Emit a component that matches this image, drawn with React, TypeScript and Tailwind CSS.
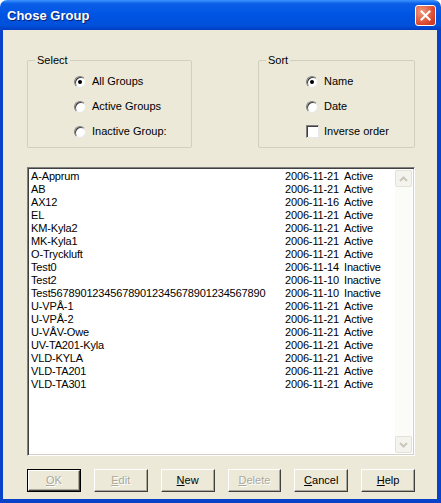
import React from "react";

const rows: [string, string, string][] = [
  ["A-Apprum", "2006-11-21", "Active"],
  ["AB", "2006-11-21", "Active"],
  ["AX12", "2006-11-16", "Active"],
  ["EL", "2006-11-21", "Active"],
  ["KM-Kyla2", "2006-11-21", "Active"],
  ["MK-Kyla1", "2006-11-21", "Active"],
  ["O-Tryckluft", "2006-11-21", "Active"],
  ["Test0", "2006-11-14", "Inactive"],
  ["Test2", "2006-11-10", "Inactive"],
  ["Test567890123456789012345678901234567890", "2006-11-10", "Inactive"],
  ["U-VPÅ-1", "2006-11-21", "Active"],
  ["U-VPÅ-2", "2006-11-21", "Active"],
  ["U-VÅV-Owe", "2006-11-21", "Active"],
  ["UV-TA201-Kyla", "2006-11-21", "Active"],
  ["VLD-KYLA", "2006-11-21", "Active"],
  ["VLD-TA201", "2006-11-21", "Active"],
  ["VLD-TA301", "2006-11-21", "Active"],
];

function Radio({ label, checked }: { label: string; checked?: boolean }) {
  return (
    <div className="flex items-center h-[13px]">
      <span className="w-[12px] h-[12px] rounded-full bg-white border border-t-[#808080] border-l-[#808080] border-b-[#e8e8e8] border-r-[#e8e8e8] flex items-center justify-center shadow-[inset_1px_1px_0_#404040]">
        {checked && <span className="w-[4px] h-[4px] rounded-full bg-black" />}
      </span>
      <span className="ml-[6px]">{label}</span>
    </div>
  );
}

function Btn({ u, rest, disabled, def }: { u: string; rest: string; disabled?: boolean; def?: boolean }) {
  return (
    <div className={`w-[54px] h-[23px] ${def ? "border border-black" : ""}`}>
      <div className="w-full h-full border border-t-white border-l-white border-b-[#404040] border-r-[#404040] shadow-[inset_-1px_-1px_0_#aca899] flex items-center justify-center">
        <span className={disabled ? "text-[#aca899] [text-shadow:1px_1px_0_#fff]" : "text-black"}>
          <span className="underline">{u}</span>
          {rest}
        </span>
      </div>
    </div>
  );
}

export default function App() {
  return (
    <div className="w-[441px] h-[503px] flex flex-col text-[11px] text-black" style={{ fontFamily: '"Liberation Sans", Arial, sans-serif' }}>
      <div className="h-[30px] rounded-t-[7px] bg-[linear-gradient(#3d95ff_0%,#0a5fe8_12%,#0054e3_50%,#0050da_85%,#003dc0_100%)] flex items-center pl-[7px] pr-[5px]">
        <span className="text-white font-bold text-[13px] mt-[2px] [text-shadow:1px_1px_0_#0a1e6e]">Chose Group</span>
        <div className="ml-auto w-[21px] h-[21px] rounded-[3px] border border-white bg-[radial-gradient(circle_at_30%_30%,#f09a7f,#d9442a_70%,#c0341f)] flex items-center justify-center">
          <svg width="11" height="11" viewBox="0 0 11 11">
            <path d="M1.5 1.5 L9.5 9.5 M9.5 1.5 L1.5 9.5" stroke="white" strokeWidth="2" strokeLinecap="square" />
          </svg>
        </div>
      </div>
      <div className="flex-1 bg-[#ece9d8] border-l-[3px] border-r-[4px] border-b-[4px] border-[#0842c8] flex flex-col pl-[24px] pr-[22px]">
        <div className="flex justify-between mt-[24px]">
          <fieldset className="w-[165px] h-[94px] border border-[#d0d0bf] rounded-[2px] px-[2px]">
            <legend className="ml-[5px] px-[2px] leading-[13px]">Select</legend>
            <div className="flex flex-col gap-[12px] pl-[44px] pt-[8px]">
              <Radio label="All Groups" checked />
              <Radio label="Active Groups" />
              <Radio label="Inactive Group:" />
            </div>
          </fieldset>
          <fieldset className="w-[157px] h-[94px] border border-[#d0d0bf] rounded-[2px] px-[2px]">
            <legend className="ml-[5px] px-[2px] leading-[13px]">Sort</legend>
            <div className="flex flex-col gap-[12px] pl-[45px] pt-[8px]">
              <Radio label="Name" checked />
              <Radio label="Date" />
              <div className="flex items-center h-[13px]">
                <span className="w-[13px] h-[13px] bg-white border border-t-[#808080] border-l-[#808080] border-b-[#e8e8e8] border-r-[#e8e8e8] shadow-[inset_1px_1px_0_#404040]" />
                <span className="ml-[5px]">Inverse order</span>
              </div>
            </div>
          </fieldset>
        </div>
        <div className="mt-[19px] h-[289px] flex bg-white border border-t-[#808080] border-l-[#808080] border-b-white border-r-white shadow-[inset_1px_1px_0_#404040,inset_-1px_-1px_0_#d4d0c8]">
          <div className="flex-1 pl-[3px] pt-[2px] tracking-[-0.15px]">
            {rows.map((r, i) => (
              <div key={i} className="flex h-[13px] leading-[13px]">
                <span className="w-[254px] whitespace-nowrap">{r[0]}</span>
                <span className="w-[59px]">{r[1]}</span>
                <span>{r[2]}</span>
              </div>
            ))}
          </div>
          <div className="w-[17px] my-[2px] mr-[2px] bg-[#fbfbf8] flex flex-col justify-between">
            <div className="h-[17px] border border-[#e4e2d6] rounded-[2px] bg-[#f4f3ee] flex items-center justify-center">
              <svg width="9" height="6" viewBox="0 0 9 6"><path d="M1 5 L4.5 1.5 L8 5" fill="none" stroke="#c9c7ba" strokeWidth="2" /></svg>
            </div>
            <div className="h-[17px] border border-[#e4e2d6] rounded-[2px] bg-[#f4f3ee] flex items-center justify-center">
              <svg width="9" height="6" viewBox="0 0 9 6"><path d="M1 1 L4.5 4.5 L8 1" fill="none" stroke="#c9c7ba" strokeWidth="2" /></svg>
            </div>
          </div>
        </div>
        <div className="flex mt-[13px] gap-[13px]">
          <Btn u="O" rest="K" disabled def />
          <Btn u="E" rest="dit" disabled />
          <Btn u="N" rest="ew" />
          <Btn u="D" rest="elete" disabled />
          <Btn u="C" rest="ancel" />
          <Btn u="H" rest="elp" />
        </div>
      </div>
    </div>
  );
}
